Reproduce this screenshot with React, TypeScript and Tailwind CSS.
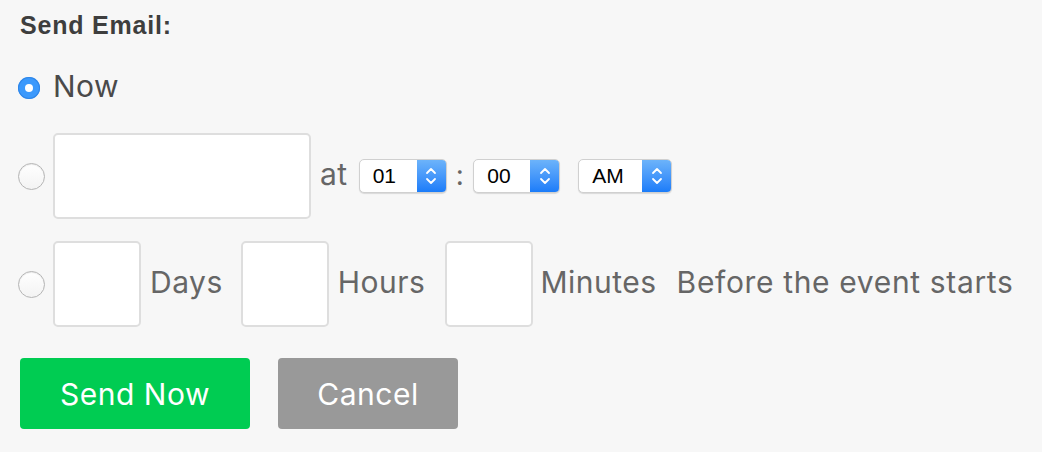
import React from 'react';

function Radio({ checked }: { checked?: boolean }) {
  if (checked) {
    return (
      <span className="w-[22px] h-[22px] rounded-full bg-[#3b99fc] shadow-[inset_0_0_0_1px_#2f86e8] flex items-center justify-center shrink-0">
        <span className="w-[8px] h-[8px] rounded-full bg-white" />
      </span>
    );
  }
  return (
    <span className="w-[27px] h-[27px] rounded-full bg-gradient-to-b from-white to-[#f3f3f3] border border-[#b5b5b5] shadow-[inset_0_1px_1px_rgba(0,0,0,0.08)] shrink-0" />
  );
}

function Stepper({ value, width }: { value: string; width: string }) {
  return (
    <div className={`h-[34px] ${width} flex rounded-[5px] bg-white border border-[#d0d0d0] shadow-[0_1px_1px_rgba(0,0,0,0.12)] overflow-hidden`}>
      <span className="flex-1 flex items-center pl-[13px] text-[21px] text-black font-['Liberation_Sans',sans-serif] tracking-normal">{value}</span>
      <span className="w-[29px] h-full bg-gradient-to-b from-[#6cb3fa] to-[#1a7cf9] flex items-center justify-center">
        <svg width="12" height="22" viewBox="0 0 12 22" fill="none" stroke="white" strokeWidth="1.8" strokeLinecap="round" strokeLinejoin="round">
          <path d="M2 8 L6 4 L10 8" />
          <path d="M2 14 L6 18 L10 14" />
        </svg>
      </span>
    </div>
  );
}

export default function App() {
  return (
    <div className="min-h-screen bg-[#f7f7f7] pl-[18px] pt-[11px] font-['Inter',sans-serif] text-[30px] tracking-[0.5px] text-[#666666]">
      <h2 className="pl-[2px] font-['Liberation_Sans',sans-serif] font-bold text-[25px] tracking-[0.8px] leading-[28px] text-[#3e3e3e]">
        Send Email:
      </h2>

      {/* Now */}
      <div className="mt-[29px] h-[40px] flex items-center">
        <span className="w-[24px] flex justify-start"><Radio checked /></span>
        <span className="ml-[11px] mb-[5px] text-[#4a4a4a] leading-none">Now</span>
      </div>

      {/* specific date */}
      <div className="mt-[25px] flex items-center">
        <Radio />
        <div className="ml-[8px] w-[258px] h-[86px] bg-white border-2 border-[#dedede] rounded-[5px]" />
        <span className="ml-[9px] mb-[4px] leading-none">at</span>
        <div className="ml-[11px]"><Stepper value="01" width="w-[88px]" /></div>
        <span className="mx-[9px] mb-[2px] text-[28px] leading-none">:</span>
        <Stepper value="00" width="w-[87px]" />
        <div className="ml-[18px]"><Stepper value="AM" width="w-[94px]" /></div>
      </div>

      {/* relative */}
      <div className="mt-[22px] flex items-center">
        <Radio />
        <div className="ml-[8px] w-[88px] h-[86px] bg-white border-2 border-[#dedede] rounded-[5px]" />
        <span className="ml-[9px] mb-[4px] leading-none">Days</span>
        <div className="ml-[18px] w-[88px] h-[86px] bg-white border-2 border-[#dedede] rounded-[5px]" />
        <span className="ml-[9px] mb-[4px] leading-none">Hours</span>
        <div className="ml-[20px] w-[88px] h-[86px] bg-white border-2 border-[#dedede] rounded-[5px]" />
        <span className="ml-[7px] mb-[4px] leading-none">Minutes</span>
        <span className="ml-[20px] mb-[4px] tracking-[0.65px] leading-none">Before the event starts</span>
      </div>

      {/* actions */}
      <div className="mt-[31px] flex gap-[28px] pl-[2px]">
        <button className="w-[230px] h-[71px] rounded-[4px] bg-[#00cc52] text-white text-[30px] leading-none">
          Send Now
        </button>
        <button className="w-[180px] h-[71px] rounded-[4px] bg-[#999999] text-white text-[30px] leading-none">
          Cancel
        </button>
      </div>
    </div>
  );
}
